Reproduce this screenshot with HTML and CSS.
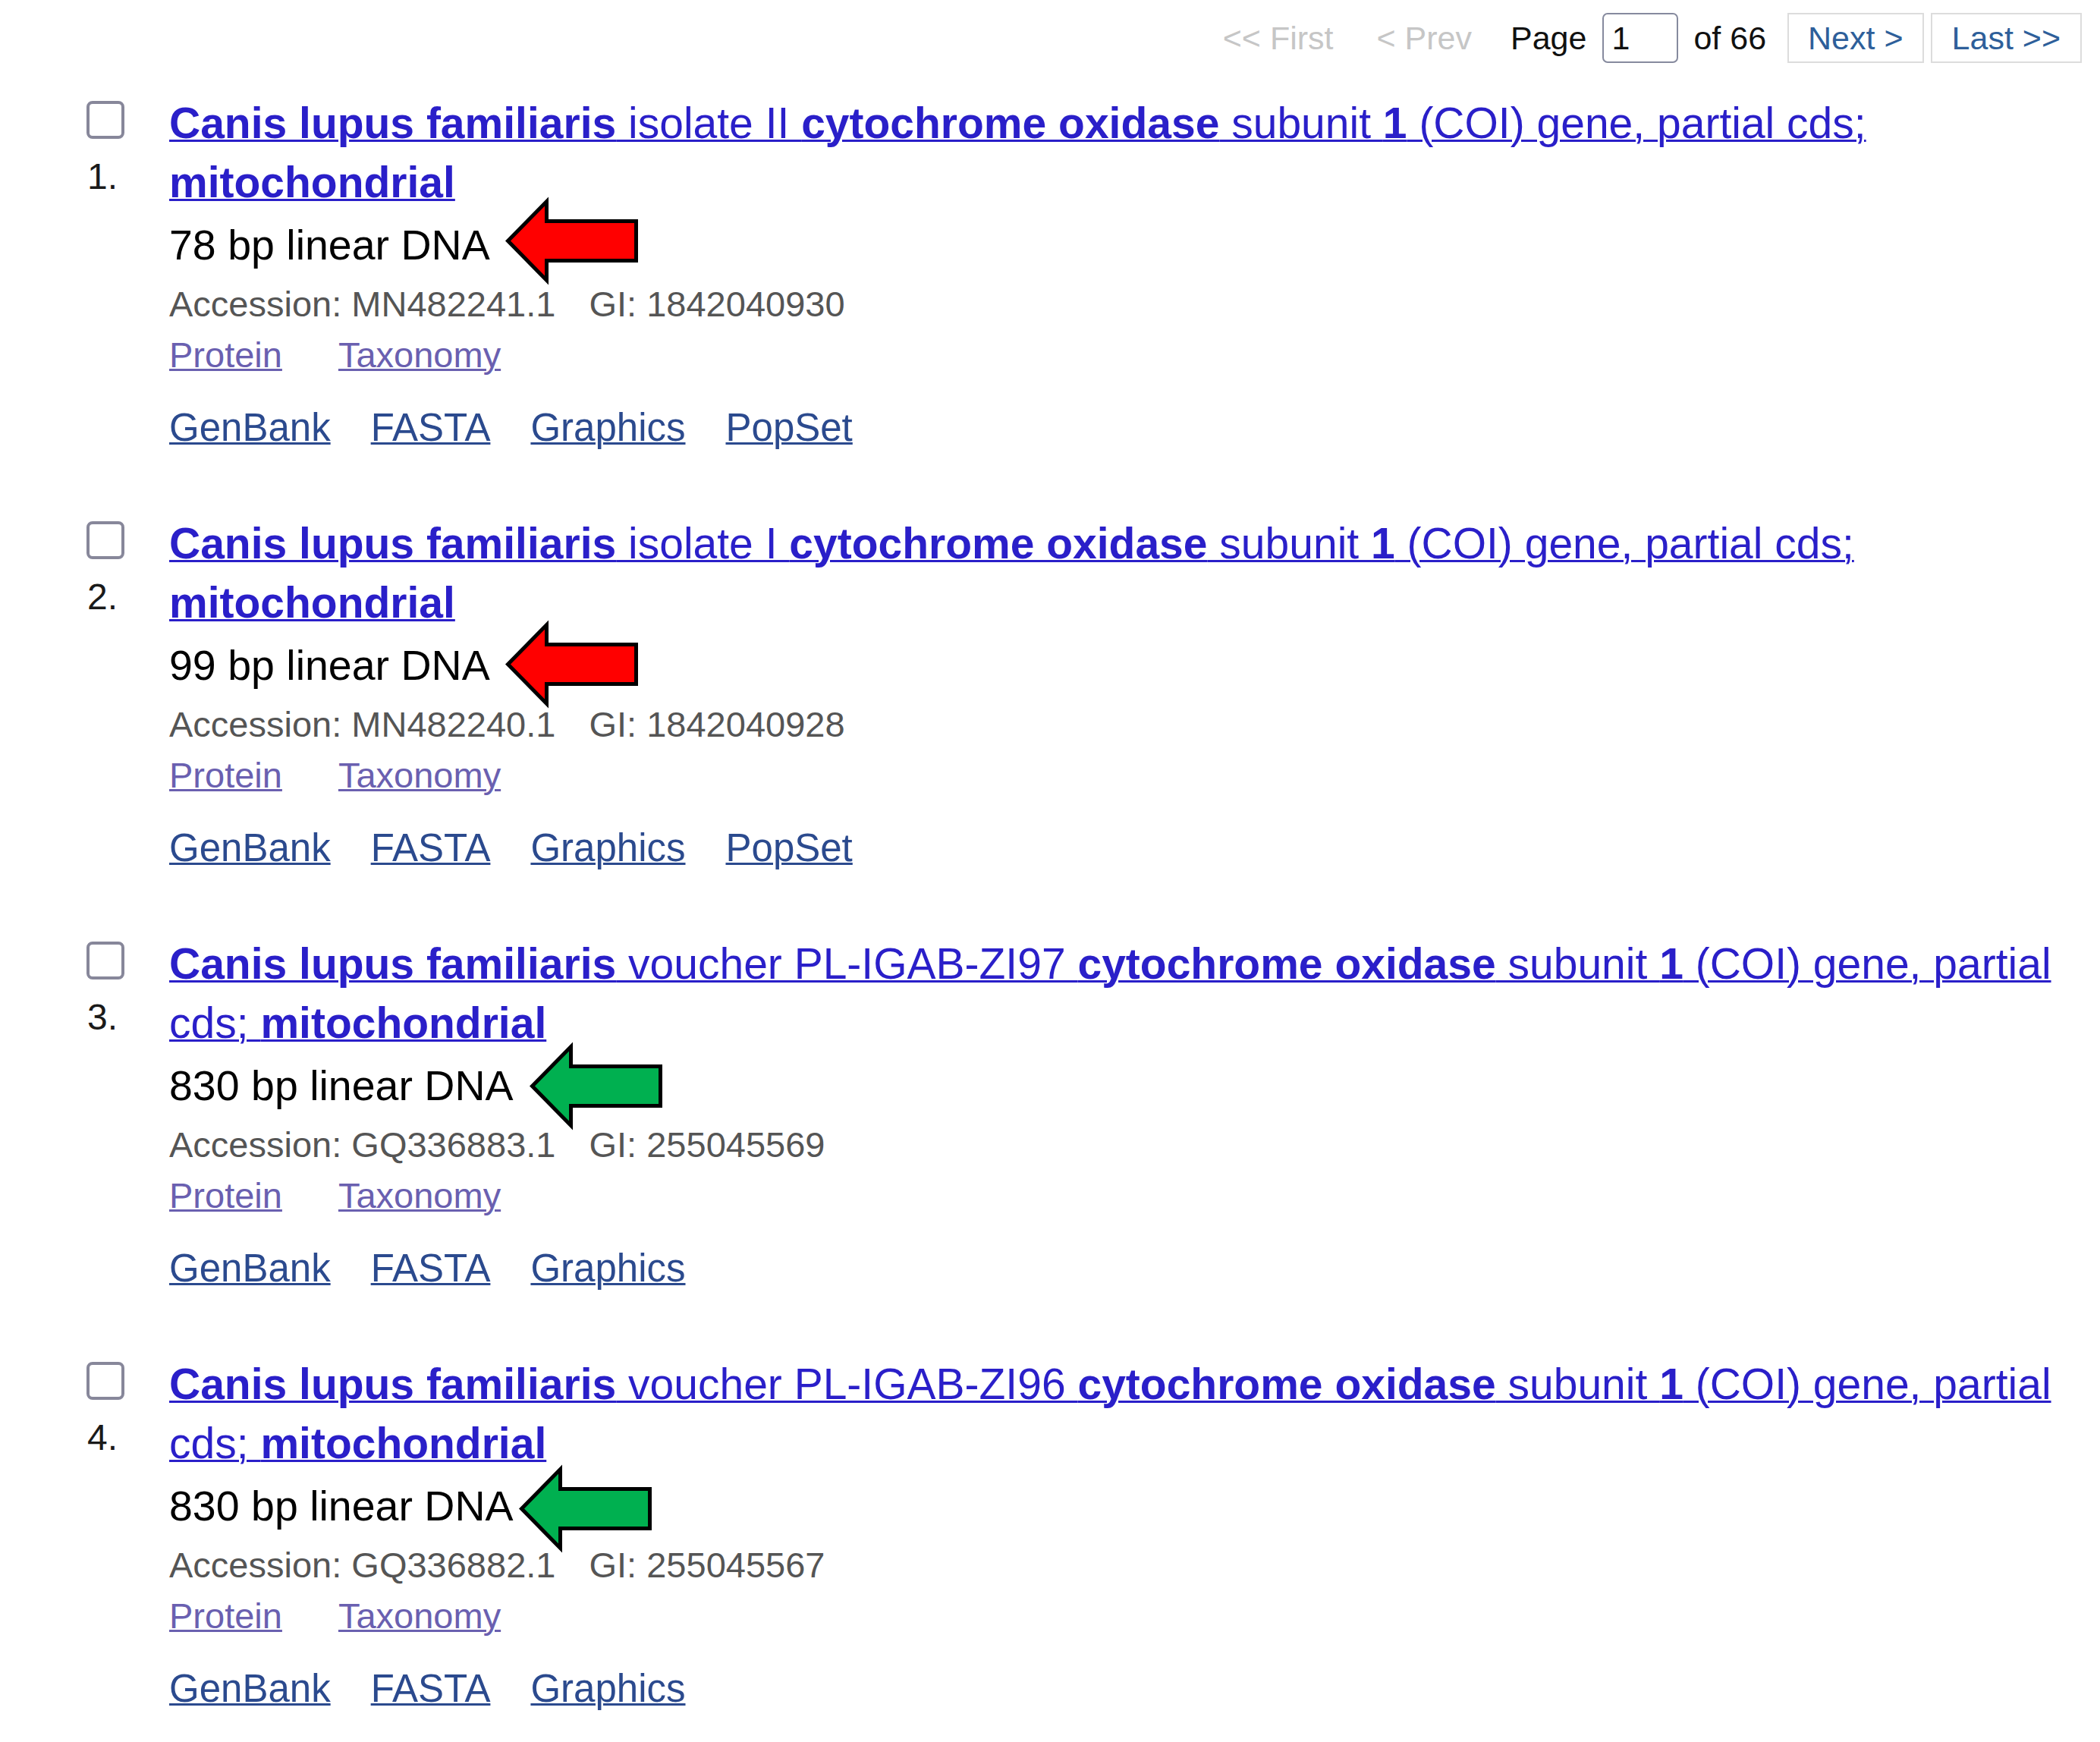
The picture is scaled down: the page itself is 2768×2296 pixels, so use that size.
FILE: index.html
```html
<!DOCTYPE html>
<html lang="en">
<head>
<meta charset="utf-8">
<title>Nucleotide results</title>
<link rel="stylesheet" href="styles.css">
</head>
<body>
<div class="pager">
  <span class="pager__off pager__first">&lt;&lt; First</span>
  <span class="pager__off pager__prev">&lt; Prev</span>
  <span class="pager__label">Page</span>
  <span class="pager__input">1</span>
  <span class="pager__of">of 66</span>
  <a class="pager__btn" href="#">Next &gt;</a>
  <a class="pager__btn pager__btn--last" href="#">Last &gt;&gt;</a>
</div>

<div class="results">
  <div class="rslt">
    <div class="rslt__side">
      <span class="cb"></span>
      <span class="num">1.</span>
    </div>
    <div class="rslt__body">
      <p class="title"><a href="#"><b>Canis lupus familiaris</b><span> isolate II </span><b>cytochrome oxidase</b><span> subunit </span><b>1</b><span> (COI) gene, partial cds; </span><b>mitochondrial</b></a></p>
      <p class="desc">78 bp linear DNA<svg class="arrow arrow--a1" viewBox="0 0 174 109" width="174" height="109"><polygon points="2.5,54.5 53.5,2.5 53.5,28.5 171.5,28.5 171.5,80.5 53.5,80.5 53.5,106.5" fill="#ff0000" stroke="#000" stroke-width="5"/></svg></p>
      <p class="acc"><span>Accession: MN482241.1</span><span class="gi">GI: 1842040930</span></p>
      <p class="links1"><a href="#">Protein</a><a href="#">Taxonomy</a></p>
      <p class="links2"><a href="#">GenBank</a><a href="#">FASTA</a><a href="#">Graphics</a><a href="#">PopSet</a></p>
    </div>
  </div>

  <div class="rslt">
    <div class="rslt__side">
      <span class="cb"></span>
      <span class="num">2.</span>
    </div>
    <div class="rslt__body">
      <p class="title"><a href="#"><b>Canis lupus familiaris</b><span> isolate I </span><b>cytochrome oxidase</b><span> subunit </span><b>1</b><span> (COI) gene, partial cds; </span><b>mitochondrial</b></a></p>
      <p class="desc">99 bp linear DNA<svg class="arrow arrow--a2" viewBox="0 0 174 109" width="174" height="109"><polygon points="2.5,54.5 53.5,2.5 53.5,28.5 171.5,28.5 171.5,80.5 53.5,80.5 53.5,106.5" fill="#ff0000" stroke="#000" stroke-width="5"/></svg></p>
      <p class="acc"><span>Accession: MN482240.1</span><span class="gi">GI: 1842040928</span></p>
      <p class="links1"><a href="#">Protein</a><a href="#">Taxonomy</a></p>
      <p class="links2"><a href="#">GenBank</a><a href="#">FASTA</a><a href="#">Graphics</a><a href="#">PopSet</a></p>
    </div>
  </div>

  <div class="rslt">
    <div class="rslt__side">
      <span class="cb"></span>
      <span class="num">3.</span>
    </div>
    <div class="rslt__body">
      <p class="title"><a href="#"><b>Canis lupus familiaris</b><span> voucher PL-IGAB-ZI97 </span><b>cytochrome oxidase</b><span> subunit </span><b>1</b><span> (COI) gene, partial</span> <span>cds; </span><b>mitochondrial</b></a></p>
      <p class="desc">830 bp linear DNA<svg class="arrow arrow--a3" viewBox="0 0 174 109" width="174" height="109"><polygon points="2.5,54.5 53.5,2.5 53.5,28.5 171.5,28.5 171.5,80.5 53.5,80.5 53.5,106.5" fill="#00b050" stroke="#000" stroke-width="5"/></svg></p>
      <p class="acc"><span>Accession: GQ336883.1</span><span class="gi">GI: 255045569</span></p>
      <p class="links1"><a href="#">Protein</a><a href="#">Taxonomy</a></p>
      <p class="links2"><a href="#">GenBank</a><a href="#">FASTA</a><a href="#">Graphics</a></p>
    </div>
  </div>

  <div class="rslt">
    <div class="rslt__side">
      <span class="cb"></span>
      <span class="num">4.</span>
    </div>
    <div class="rslt__body">
      <p class="title"><a href="#"><b>Canis lupus familiaris</b><span> voucher PL-IGAB-ZI96 </span><b>cytochrome oxidase</b><span> subunit </span><b>1</b><span> (COI) gene, partial</span> <span>cds; </span><b>mitochondrial</b></a></p>
      <p class="desc">830 bp linear DNA<svg class="arrow arrow--a4" viewBox="0 0 174 109" width="174" height="109"><polygon points="2.5,54.5 53.5,2.5 53.5,28.5 171.5,28.5 171.5,80.5 53.5,80.5 53.5,106.5" fill="#00b050" stroke="#000" stroke-width="5"/></svg></p>
      <p class="acc"><span>Accession: GQ336882.1</span><span class="gi">GI: 255045567</span></p>
      <p class="links1"><a href="#">Protein</a><a href="#">Taxonomy</a></p>
      <p class="links2"><a href="#">GenBank</a><a href="#">FASTA</a><a href="#">Graphics</a></p>
    </div>
  </div>
</div>
</body>
</html>
```

FILE: styles.css
```css
html, body {
  margin: 0;
  padding: 0;
  background: #ffffff;
}

body {
  font-family: "Liberation Sans", Arial, Helvetica, sans-serif;
  color: #000;
}

p {
  margin: 0;
}

/* ---------- pager ---------- */
.pager {
  display: flex;
  justify-content: flex-end;
  align-items: center;
  height: 66px;
  padding: 17px 24px 0 0;
  font-size: 43px;
  line-height: 66px;
}

.pager__off {
  color: #c6c6c6;
}

.pager__first {
  margin-right: 57px;
}

.pager__prev {
  margin-right: 51px;
}

.pager__label {
  color: #111;
  margin-right: 21px;
}

.pager__input {
  box-sizing: border-box;
  width: 100px;
  height: 66px;
  border: 2px solid #868a9e;
  border-radius: 7px;
  padding-left: 10px;
  line-height: 62px;
  color: #111;
  margin-right: 20px;
}

.pager__of {
  color: #111;
  margin-right: 28px;
}

.pager__btn {
  box-sizing: border-box;
  height: 66px;
  line-height: 62px;
  padding: 0 25px;
  border: 2px solid #dcdcdc;
  color: #2e5f9a;
  text-decoration: none;
}

.pager__btn--last {
  margin-left: 9px;
  padding: 0 26px;
}

/* ---------- results ---------- */
.results {
  padding: 40px 24px 0 114px;
}

.rslt {
  display: grid;
  grid-template-columns: 109px 1fr;
  margin-bottom: 80px;
}

.rslt__side {
  display: flex;
  flex-direction: column;
  align-items: flex-start;
}

.cb {
  box-sizing: border-box;
  display: block;
  width: 50px;
  height: 50px;
  margin-top: 10px;
  border: 4px solid #87879a;
  border-radius: 8px;
  background: #fff;
}

.num {
  display: block;
  margin-top: 22px;
  padding-left: 1px;
  font-size: 48px;
  line-height: 56px;
  color: #1a1a1a;
}

.title {
  font-size: 57px;
  line-height: 78px;
}

.title a {
  color: #2a1fc9;
  text-decoration: underline;
  text-decoration-thickness: 3px;
}

.title b {
  font-weight: bold;
}

.desc {
  position: relative;
  margin-top: 11px;
  font-size: 55.5px;
  line-height: 66px;
  color: #000;
}

.arrow {
  position: absolute;
  overflow: visible;
}

.arrow--a1 { left: 444px; top: -27px; }
.arrow--a2 { left: 444px; top: -23px; }
.arrow--a3 { left: 476px; top: -21px; }
.arrow--a4 { left: 462px; top: -18px; }

.acc {
  margin-top: 15px;
  font-size: 47px;
  line-height: 60px;
  color: #555;
}

.acc .gi {
  margin-left: 44px;
}

.links1 {
  margin-top: 7px;
  font-size: 47px;
  line-height: 60px;
  display: flex;
  gap: 74px;
}

.links1 a {
  color: #6a60b0;
  text-decoration: underline;
  text-decoration-thickness: 3px;
}

.links2 {
  margin-top: 33px;
  font-size: 51px;
  line-height: 66px;
  display: flex;
  gap: 53px;
}

.links2 a {
  color: #2b4a8e;
  text-decoration: underline;
  text-decoration-thickness: 3px;
}
```
